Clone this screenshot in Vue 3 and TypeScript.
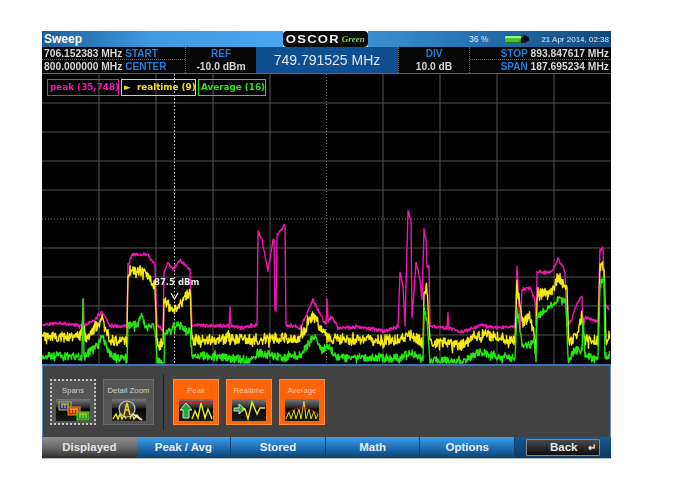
<script setup lang="ts">
type Pt = [number, number];

// anchors are in page pixels, the svg viewBox starts at the chart's corner
const peakAnchors: Pt[] = [
  [42, 325], [60, 323], [83, 326], [83.5, 299], [84, 326], [96, 319], [98, 315], [102, 312], [110, 326], [127, 326],
  [128, 265], [132, 255], [147, 254], [155, 265], [157, 325], [163, 330], [164, 272], [168, 263], [173, 270], [180, 260],
  [190, 270], [192, 325], [229, 326], [230, 307], [231, 326], [240, 328], [257, 325], [258, 232], [262, 240], [268, 270],
  [273, 240], [274, 240], [275, 310], [276, 310], [277, 235], [285, 225], [286, 325], [300, 328], [313, 300], [323, 320],
  [326, 325], [327, 300], [328, 322], [332, 316], [338, 328], [358, 327], [385, 331], [398, 326], [400, 273], [403, 285],
  [405, 325], [408, 210], [411, 220], [412, 318], [416, 262], [420, 280], [422, 300], [424, 230], [426, 240], [427, 268],
  [429, 266], [430, 326], [447, 328], [448, 312], [449, 328], [462, 332], [482, 325], [495, 328], [515, 326], [517, 265],
  [520, 330], [522, 290], [530, 288], [535, 300], [536, 325], [537, 272], [552, 272], [558, 258], [565, 272], [567, 325],
  [572, 320], [575, 308], [582, 295], [583, 330], [585, 317], [598, 322], [600, 250], [603, 248], [605, 305], [610, 310],
];
const realtimeAnchors: Pt[] = [
  [42, 338], [80, 336], [83, 320], [85, 338], [98, 325], [102, 320], [110, 340], [127, 342], [128, 272], [132, 268],
  [140, 270], [147, 276], [155, 286], [157, 344], [163, 344], [164, 300], [172, 310], [180, 305], [190, 290], [192, 340],
  [260, 339], [300, 338], [313, 315], [320, 326], [327, 338], [338, 340], [400, 340], [412, 335], [420, 340], [423, 345],
  [424, 288], [427, 290], [430, 342], [462, 345], [482, 335], [515, 340], [517, 286], [523, 322], [530, 316], [535, 340],
  [536, 350], [537, 296], [552, 290], [560, 277], [567, 292], [569, 342], [578, 335], [582, 310], [584, 340], [598, 340],
  [600, 265], [604, 265], [606, 340], [610, 335],
];
const averageAnchors: Pt[] = [
  [42, 355], [82, 357], [83, 302], [84, 357], [98, 345], [102, 336], [110, 355], [127, 360], [128, 325], [138, 325],
  [141, 313], [145, 325], [155, 328], [157, 362], [164, 362], [165, 335], [172, 330], [178, 325], [190, 332], [192, 355],
  [250, 360], [260, 353], [275, 356], [285, 358], [300, 355], [315, 335], [322, 350], [327, 345], [338, 358], [400, 358],
  [410, 352], [420, 358], [423, 360], [424, 310], [427, 320], [430, 360], [462, 362], [480, 352], [500, 358], [515, 358],
  [517, 310], [522, 345], [530, 345], [534, 342], [536, 362], [537, 318], [545, 310], [560, 298], [566, 305], [568, 360],
  [575, 350], [582, 350], [583, 320], [585, 355], [598, 360], [600, 285], [604, 280], [605, 360], [610, 355],
];

function buildTrace(anchors: Pt[], amp: number, seed: number): string {
  let s = seed;
  const rand = () => {
    s = (s + 0x6d2b79f5) | 0;
    let t = Math.imul(s ^ (s >>> 15), 1 | s);
    t = (t + Math.imul(t ^ (t >>> 7), 61 | t)) ^ t;
    return ((t ^ (t >>> 14)) >>> 0) / 4294967296;
  };
  const out: string[] = [];
  for (let i = 0; i < anchors.length - 1; i++) {
    const [x0, y0] = anchors[i];
    const [x1, y1] = anchors[i + 1];
    const steps = Math.max(1, Math.round((x1 - x0) / 0.5));
    for (let k = 0; k < steps; k++) {
      const t = k / steps;
      const kick = rand() > 0.9 ? 1.6 : 1;
      const y = y0 + (y1 - y0) * t + (rand() - 0.5) * 2 * amp * kick;
      out.push(`${(x0 + (x1 - x0) * t).toFixed(1)},${Math.min(y, 363).toFixed(1)}`);
    }
  }
  return out.join(' ');
}

const peakTrace = buildTrace(peakAnchors, 1.5, 11);
const realtimeTrace = buildTrace(realtimeAnchors, 5.5, 29);
const averageTrace = buildTrace(averageAnchors, 4, 53);

const gridX = [99, 156, 213, 270, 383, 440, 497, 554];
const gridY = [103, 132, 161, 190, 248, 277, 306, 335];

const tabs = ['Displayed', 'Peak / Avg', 'Stored', 'Math', 'Options'];
</script>

<template>
  <div class="page">
    <div class="device">
      <header class="titlebar">
        <div class="title-left">Sweep</div>
        <div class="logo">
          <span class="logo-word">OSCOR</span>
          <span class="logo-green">Green</span>
        </div>
        <div class="title-right">
          <span class="pct">36 %</span>
          <svg class="battery" width="26" height="10" viewBox="0 0 26 10">
            <path d="M1 1H21L25 3.5V6.5L21 9H1Z" fill="#111" />
            <rect x="1" y="1.5" width="16" height="7" fill="#45c42c" />
            <path d="M1 2H17V4H1Z" fill="#a5ee8a" />
            <path d="M17 1.5H20L14 8.5H17Z" fill="#2f8a1f" />
          </svg>
          <span class="date">21 Apr 2014, 02:38</span>
        </div>
      </header>

      <section class="info">
        <div class="cell split">
          <div class="line"><b>706.152383 MHz</b> <em>START</em></div>
          <div class="line"><b>800.000000 MHz</b> <em>CENTER</em></div>
        </div>
        <div class="cell stack">
          <em>REF</em>
          <b>-10.0 dBm</b>
        </div>
        <div class="freq">749.791525 MHz</div>
        <div class="cell stack">
          <em>DIV</em>
          <b>10.0 dB</b>
        </div>
        <div class="cell split right">
          <div class="line"><em>STOP</em> <b>893.847617 MHz</b></div>
          <div class="line"><em>SPAN</em> <b>187.695234 MHz</b></div>
        </div>
      </section>

      <section class="chart">
        <svg class="plot" width="569" height="290" viewBox="42 74 569 290">
          <line v-for="x in gridX" :key="x" :x1="x" :x2="x" y1="74" y2="364" class="grid" />
          <line v-for="y in gridY" :key="y" x1="42" x2="611" :y1="y" :y2="y" class="grid" />
          <line x1="326.5" x2="326.5" y1="74" y2="364" class="grid dotted" />
          <line x1="42" x2="611" y1="219" y2="219" class="grid dotted" />
          <line x1="174.5" x2="174.5" y1="74" y2="364" class="cursor" />
          <polyline :points="peakTrace" class="trace" stroke="#f015b4" />
          <polyline :points="realtimeTrace" class="trace" stroke="#f5ea10" />
          <polyline :points="averageTrace" class="trace" stroke="#22e80c" />
          <path d="M171 293L174.5 299L178 293" fill="none" stroke="#eee" stroke-width="1.2" />
        </svg>
        <div class="legend">
          <span class="chip pink">peak (35,748)</span>
          <span class="chip yellow">►&nbsp; realtime (9)</span>
          <span class="chip green">Average (16)</span>
        </div>
        <div class="marker">87.5 dBm</div>
      </section>

      <section class="panel">
        <div class="tool selected">
          <span class="tool-label">Spans</span>
          <svg class="thumb" viewBox="0 0 34 22">
            <rect x="3" y="3" width="12" height="8" fill="#1b3fa8" stroke="#d8b020" />
            <path d="M6 9V5M9 9V5M12 9V5M5 5H13" stroke="#f0d020" fill="none" />
            <rect x="12" y="8" width="12" height="8" fill="#c82a10" stroke="#e09020" />
            <path d="M15 14V10M18 14V10M21 14V10M14 10H22" stroke="#f0d020" fill="none" />
            <rect x="21" y="13" width="12" height="8" fill="#1f9a24" stroke="#60d040" />
            <path d="M24 19V15M27 19V15M30 19V15M23 15H31" stroke="#f0d020" fill="none" />
          </svg>
        </div>
        <div class="tool wide">
          <span class="tool-label">Detail Zoom</span>
          <svg class="thumb" viewBox="0 0 34 22">
            <path d="M1 20L4 15L6 20L8 15L10 20L12 16L14 20" fill="none" stroke="#f0e818" stroke-width="1.4" />
            <path d="M18 20L20 15L22 20L25 16L28 20" fill="none" stroke="#f0e818" stroke-width="1.4" />
            <circle cx="15" cy="10" r="8" fill="#555" fill-opacity=".55" stroke="#ccc" stroke-width="1.2" />
            <path d="M12 16L15 4L18 16M13.5 11H16.5" fill="none" stroke="#e8d020" stroke-width="1.6" />
            <path d="M21 15L30 21" stroke="#e4e4e4" stroke-width="2" />
          </svg>
        </div>
        <div class="sep"></div>
        <div class="tool active">
          <span class="tool-label">Peak</span>
          <svg class="thumb" viewBox="0 0 34 22">
            <path d="M0 3H34" stroke="#e01818" stroke-width="1.4" />
            <path d="M7 4L13 11H10V19H4V11H1Z" fill="#18b030" stroke="#ddd" stroke-width="1" />
            <path d="M13 20L16 12L19 19L22 4L26 19L29 10L33 20" fill="none" stroke="#f0e818" stroke-width="1.4" />
          </svg>
        </div>
        <div class="tool active">
          <span class="tool-label">Realtime</span>
          <svg class="thumb" viewBox="0 0 34 22">
            <path d="M2 9H7V5L13 10L7 15V12H2Z" fill="#18b030" stroke="#ddd" stroke-width="1" />
            <path d="M10 10H13L16 20L20 3L25 15L28 9H33" fill="none" stroke="#f0e818" stroke-width="1.4" />
          </svg>
        </div>
        <div class="tool active">
          <span class="tool-label">Average</span>
          <svg class="thumb" viewBox="0 0 34 22">
            <path d="M1 20L4 13L6 20L9 11L11 20L14 10L16 20L19 2L21 20L24 10L26 20L29 12L31 20L33 15" fill="none" stroke="#e0d818" stroke-width="1" />
            <path d="M1 15Q17 3 33 15" fill="none" stroke="#e01818" stroke-width="1.2" stroke-dasharray="2 1" />
          </svg>
        </div>
      </section>

      <nav class="tabs">
        <div
          v-for="(tab, i) in tabs"
          :key="tab"
          class="tab"
          :class="{ current: i === 0 }"
        >{{ tab }}</div>
        <div class="back-wrap">
          <div class="back">Back <span class="enter">↵</span></div>
        </div>
      </nav>
    </div>
  </div>
</template>

<style>
html, body { background: #fff; }
</style>

<style scoped>
.page {
  width: 680px;
  height: 491px;
  padding: 31px 0 0 42px;
  box-sizing: border-box;
  background: #fff;
  overflow: hidden;
}

.device {
  width: 569px;
  display: flex;
  flex-direction: column;
  font-family: "Liberation Sans", sans-serif;
  filter: blur(0.4px);
}

.titlebar {
  height: 16px;
  display: flex;
  align-items: stretch;
  color: #fff;
}
.title-left {
  width: 241px;
  padding: 0 0 0 2px;
  box-sizing: border-box;
  background: linear-gradient(90deg, #1a5f98, #3f9ae2 45%, #4aa6ee);
  font-size: 12px;
  font-weight: bold;
  line-height: 16px;
}
.logo {
  width: 85px;
  flex: none;
  display: flex;
  align-items: center;
  padding-left: 9px;
  box-sizing: border-box;
  background: #0a0a0a;
  border-radius: 4px;
  overflow: hidden;
}
.logo-word {
  font-size: 10px;
  font-weight: bold;
  letter-spacing: 1px;
  transform: scaleX(1.3);
  margin-right: 8px;
  color: #eee;
}
.logo-green {
  font-family: "Liberation Serif", serif;
  font-size: 9px;
  font-style: italic;
  font-weight: bold;
  color: #7fd050;
}
.title-right {
  flex: 1;
  min-width: 0;
  display: flex;
  align-items: center;
  background: linear-gradient(90deg, #3d8fd2, #2a78b8 35%, #104a7c);
  font-size: 8.5px;
  color: #dfeaf3;
  white-space: nowrap;
}
.pct { margin-left: 101px; flex: none; }
.battery { margin-left: 16px; flex: none; }
.date { margin-left: 11px; flex: none; font-size: 8px; }

.info {
  height: 27px;
  box-sizing: border-box;
  display: grid;
  grid-template-columns: 143px 71px 142px 71px 142px;
  background: #050505;
  border-bottom: 1px solid #666;
  font-size: 10.3px;
}
.info b { color: #d6d6d6; font-weight: bold; }
.info em { color: #1f7fe0; font-style: normal; font-weight: bold; font-size: 10px; }
.cell { min-width: 0; }
.split { display: flex; flex-direction: column; white-space: nowrap; }
.line {
  height: 13px;
  line-height: 13px;
  padding: 0 2px;
}
.split .line:first-child { border-bottom: 1px dotted #666; height: 12px; }
.split.right { text-align: right; border-left: 1px dotted #666; }
.stack {
  display: flex;
  flex-direction: column;
  align-items: center;
  justify-content: space-around;
  border-left: 1px dotted #666;
}
.freq {
  background: #0f4f90;
  color: #dfe6ee;
  font-size: 14px;
  text-align: center;
  line-height: 26px;
  white-space: nowrap;
}

.chart {
  position: relative;
  height: 290px;
  background: #000;
}
.plot { display: block; }
.grid { stroke: #555; stroke-width: 1; }
.grid.dotted { stroke: #777; stroke-dasharray: 1 2; }
.cursor { stroke: #ddd; stroke-width: 1; stroke-dasharray: 1.5 2; }
.trace { fill: none; stroke-width: 1.4; stroke-linejoin: round; }

.legend {
  position: absolute;
  top: 5px;
  left: 5px;
  display: flex;
  gap: 2px;
}
.chip {
  height: 17px;
  box-sizing: border-box;
  line-height: 15px;
  padding: 0 2px;
  border: 1.5px solid;
  font-family: "DejaVu Sans", sans-serif;
  font-size: 8.8px;
  font-weight: bold;
  white-space: nowrap;
  overflow: hidden;
}
.pink { color: #f015b4; border-color: #f015b4; width: 72px; }
.yellow { color: #f0e010; border-color: #f0e010; width: 75px; }
.green { color: #22e80c; border-color: #22e80c; width: 68px; }

.marker {
  position: absolute;
  top: 203px;
  left: 112px;
  color: #e8e8e8;
  font-family: "DejaVu Sans", sans-serif;
  font-size: 8.5px;
  font-weight: bold;
  white-space: nowrap;
}

.panel {
  height: 73px;
  box-sizing: border-box;
  display: flex;
  align-items: center;
  gap: 7px;
  padding: 0 0 0 7px;
  background: #424242;
  border-top: 2px solid #3f73b8;
  border-left: 1px solid #5c8fd0;
  border-right: 1px solid #5c8fd0;
}
.tool {
  width: 46px;
  height: 46px;
  box-sizing: border-box;
  display: flex;
  flex-direction: column;
  align-items: center;
  padding-top: 6px;
  gap: 3px;
  background: #555;
  border: 1px solid #6a6a6a;
  font-size: 7.8px;
  color: #d0d0d0;
}
.tool.wide { width: 51px; }
.tool.selected { border: 2px dotted #c4c4c4; padding-top: 5px; }
.tool.active {
  background: #ff6408;
  border-color: #ff8a3c;
  color: #ffc9a0;
}
.tool-label { height: 10px; line-height: 10px; white-space: nowrap; }
.thumb {
  width: 34px;
  height: 22px;
  background: linear-gradient(#7a7a7a, #2a2a2a 38%, #050505 45%, #1a1a1a);
}
.sep {
  width: 1px;
  height: 56px;
  margin: 0 2px;
  background: #222;
}

.tabs {
  height: 21px;
  display: flex;
  border-bottom: 1px solid #bbb;
  background: linear-gradient(#1f76be, #0a3a66);
}
.tab {
  width: 94.6px;
  box-sizing: border-box;
  text-align: center;
  line-height: 21px;
  color: #e8eef4;
  font-size: 11.5px;
  font-weight: bold;
  background: linear-gradient(#3b9ded, #1f6fb4 50%, #0c426f);
  border-right: 1px solid #0d3f6a;
}
.tab.current {
  background: linear-gradient(#8e8e8e, #6a6a6a 50%, #2c2c2c);
  border-right: 0;
  color: #e2e2e2;
}
.back-wrap {
  flex: 1;
  display: flex;
  align-items: center;
  justify-content: center;
  background: linear-gradient(#155a94, #0b3a66);
}
.back {
  width: 74px;
  height: 17px;
  box-sizing: border-box;
  padding-left: 23px;
  line-height: 15px;
  border: 1px solid #888;
  border-radius: 1px;
  background: linear-gradient(#4a4a4a, #0c0c0c);
  color: #e4e4e4;
  font-size: 11.5px;
  font-weight: bold;
  white-space: nowrap;
}
.enter { margin-left: 7px; font-size: 10px; }
</style>
